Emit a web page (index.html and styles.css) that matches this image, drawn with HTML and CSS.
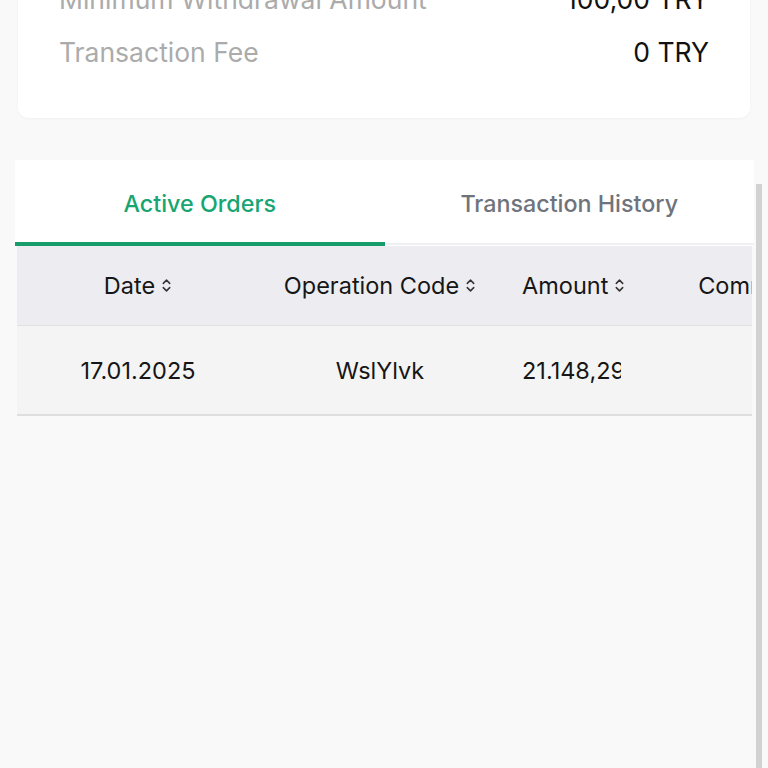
FILE: index.html
```html
<!DOCTYPE html>
<html lang="en">
<head>
    <meta charset="UTF-8">
    <meta name="viewport" content="width=device-width, initial-scale=1.0">
    <title>Withdraw</title>
    <link rel="stylesheet" href="styles.css">
</head>
<body>
    <div class="page">
        <div class="info-card">
            <div class="info-row">
                <span class="info-label">Minimum Withdrawal Amount</span>
                <span class="info-value">100,00 TRY</span>
            </div>
            <div class="info-row">
                <span class="info-label">Transaction Fee</span>
                <span class="info-value">0 TRY</span>
            </div>
        </div>

        <div class="orders-card">
            <div class="tabs">
                <div class="tab active">Active Orders</div>
                <div class="tab">Transaction History</div>
            </div>
            <div class="table-wrap">
                <div class="table">
                    <div class="row head">
                        <div class="cell">Date <svg class="sort" viewBox="0 0 10 14"><path d="M2 5 5 2 8 5M2 9 5 12 8 9"/></svg></div>
                        <div class="cell">Operation Code <svg class="sort" viewBox="0 0 10 14"><path d="M2 5 5 2 8 5M2 9 5 12 8 9"/></svg></div>
                        <div class="cell amount">Amount <svg class="sort" viewBox="0 0 10 14"><path d="M2 5 5 2 8 5M2 9 5 12 8 9"/></svg></div>
                        <div class="cell">Commission <svg class="sort" viewBox="0 0 10 14"><path d="M2 5 5 2 8 5M2 9 5 12 8 9"/></svg></div>
                    </div>
                    <div class="row body">
                        <div class="cell">17.01.2025</div>
                        <div class="cell">WslYlvk</div>
                        <div class="cell amount"><span class="clip">21.148,29 TRY</span></div>
                        <div class="cell"></div>
                    </div>
                </div>
            </div>
        </div>
    </div>
    <div class="scrollbar"></div>
</body>
</html>
```

FILE: styles.css
```css
html, body {
    margin: 0;
    padding: 0;
    height: 100%;
    overflow: hidden;
}
body {
    font-family: Inter, "Noto Sans", sans-serif;
    background-color: #f9f9f9;
    color: #111;
}
.page {
    margin-top: -27px;
}
.info-card {
    margin: 0 18px;
    background: #fff;
    border-radius: 0 0 10px 10px;
    padding: 0 41px 39px;
    box-shadow: 0 1px 3px rgba(0, 0, 0, 0.04);
}
.info-row {
    display: flex;
    justify-content: space-between;
    font-size: 26.5px;
    line-height: 53px;
}
.info-label {
    color: #ababab;
}
.info-value {
    color: #111;
}
.orders-card {
    margin: 42px 14px 0 15px;
}
.tabs {
    display: flex;
    background: #fff;
    height: 86px;
}
.tab {
    flex: 1;
    display: flex;
    align-items: center;
    justify-content: center;
    font-size: 23.3px;
    font-weight: 500;
    color: #6f747c;
    padding-top: 3px;
    border-bottom: 2px solid #efeff3;
    margin-bottom: 1px;
}
.tab.active {
    color: #17a572;
    border-bottom: 4px solid #179d6c;
    margin-bottom: 0;
    padding-top: 4px;
}
.table-wrap {
    margin: 0 2px;
    overflow: hidden;
}
.table {
    width: 900px;
}
.row {
    display: grid;
    grid-template-columns: 242px 242px 142px 264px;
    font-size: 23.5px;
}
.row.head {
    height: 79px;
    background: #ececf1;
    border-bottom: 1px solid #e0e0e5;
}
.row.body {
    height: 88px;
    background: #f4f4f4;
    border-bottom: 2px solid #dedede;
}
.cell {
    display: flex;
    align-items: center;
    justify-content: center;
    white-space: nowrap;
    overflow: hidden;
    color: #161616;
}
.cell.amount {
    justify-content: flex-start;
    padding: 0 10px 0 21px;
}
.clip {
    width: 99px;
    overflow: hidden;
    white-space: nowrap;
}
.sort {
    flex: none;
    width: 11px;
    height: 15px;
    margin-left: 6px;
    fill: none;
    stroke: #333;
    stroke-width: 1.4;
    stroke-linecap: round;
    stroke-linejoin: round;
}
.scrollbar {
    position: absolute;
    top: 184px;
    right: 6px;
    width: 6px;
    height: 600px;
    background: #d2d2d2;
}
```
